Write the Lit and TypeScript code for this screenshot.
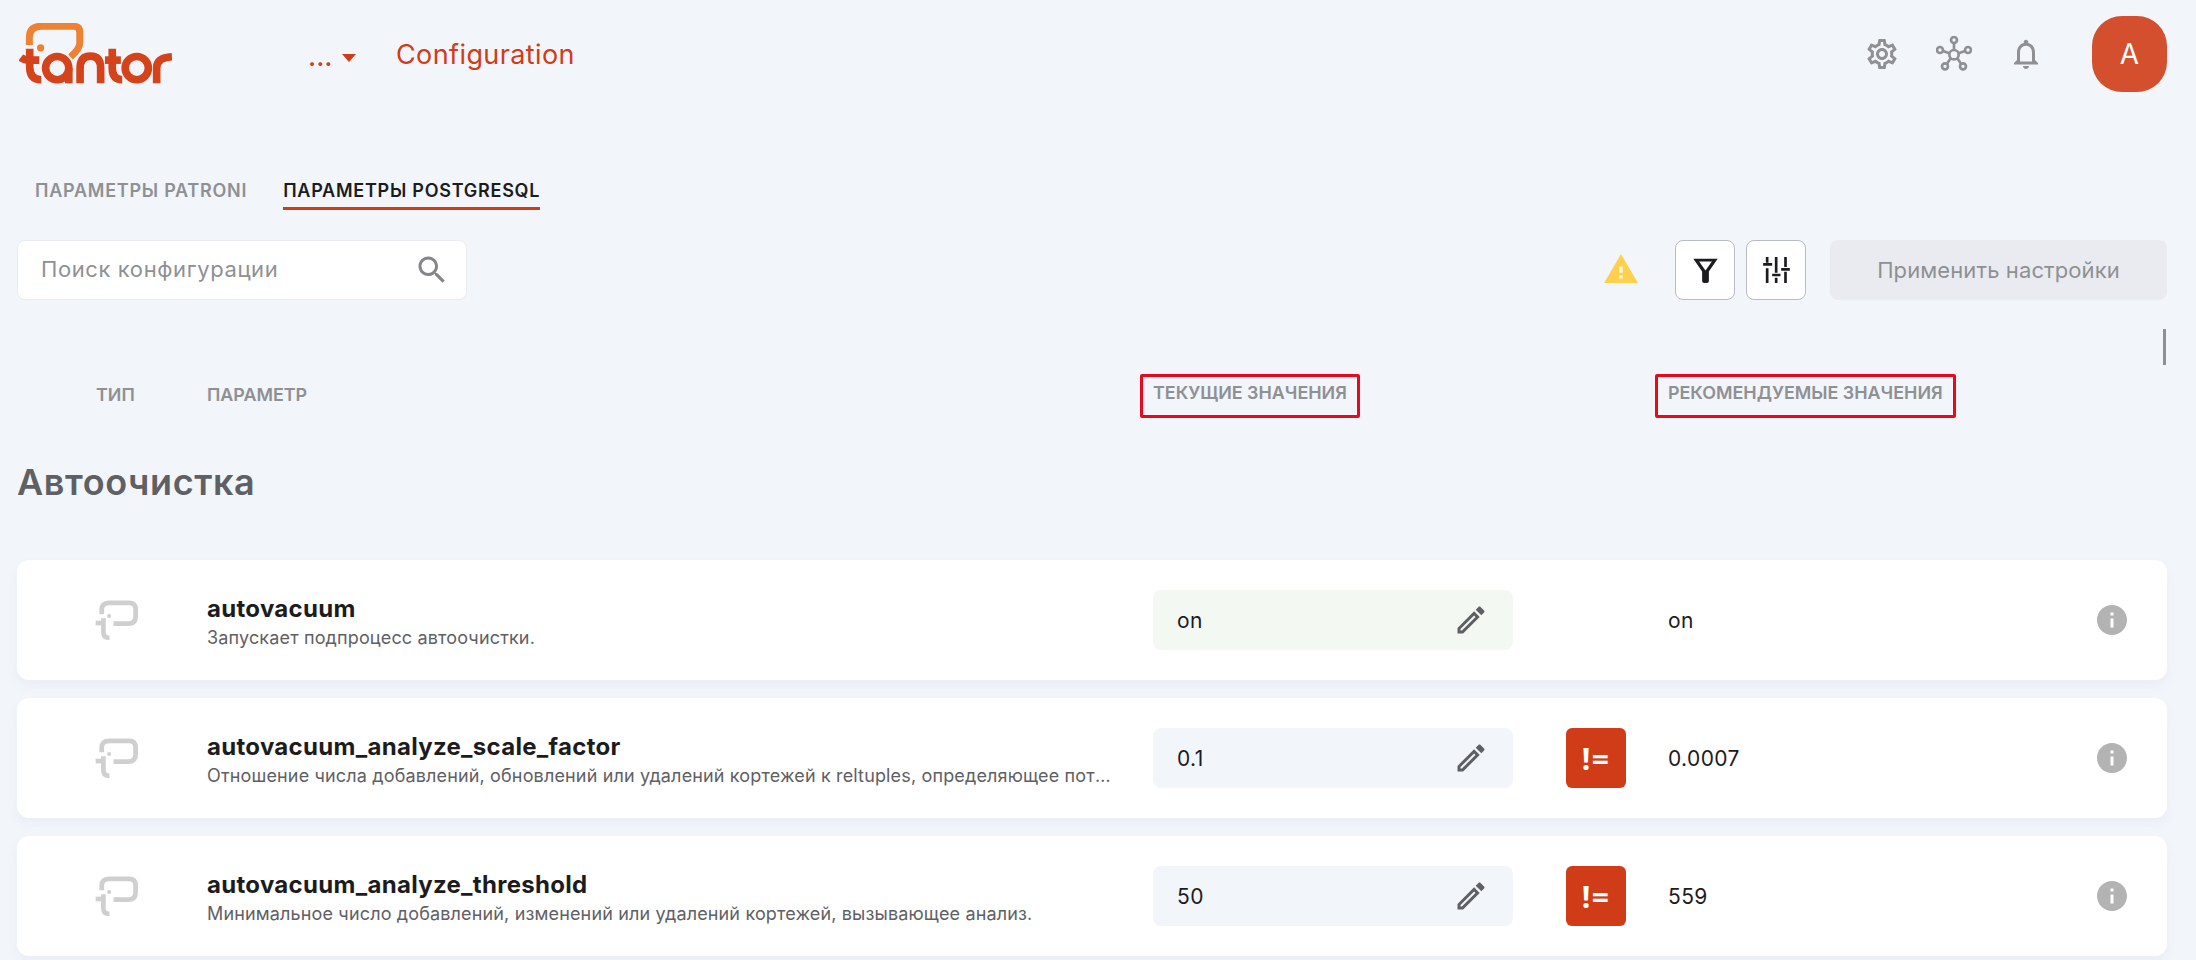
import { LitElement, html, css } from "lit";
import { customElement } from "lit/decorators.js";

const ROWS = [
  { name: "autovacuum", desc: "Запускает подпроцесс автоочистки.", cur: "on", rec: "on", match: true },
  { name: "autovacuum_analyze_scale_factor", desc: "Отношение числа добавлений, обновлений или удалений кортежей к reltuples, определяющее потребность в анализе таблицы.", cur: "0.1", rec: "0.0007", match: false },
  { name: "autovacuum_analyze_threshold", desc: "Минимальное число добавлений, изменений или удалений кортежей, вызывающее анализ.", cur: "50", rec: "559", match: false },
];

const mat = (d: string, size = 36) => html`<svg width=${size} height=${size} viewBox="0 0 24 24" fill="currentColor"><path d=${d}></path></svg>`;
const GEAR = "M19.43 12.98c.04-.32.07-.64.07-.98 0-.34-.03-.66-.07-.98l2.11-1.65c.19-.15.24-.42.12-.64l-2-3.46c-.09-.16-.26-.25-.44-.25-.06 0-.12.01-.17.03l-2.49 1c-.52-.4-1.08-.73-1.69-.98l-.38-2.65C14.46 2.18 14.25 2 14 2h-4c-.25 0-.46.18-.49.42l-.38 2.65c-.61.25-1.17.59-1.69.98l-2.49-1c-.06-.02-.12-.03-.18-.03-.17 0-.34.09-.43.25l-2 3.46c-.13.22-.07.49.12.64l2.11 1.65c-.04.32-.07.65-.07.98 0 .33.03.66.07.98l-2.11 1.65c-.19.15-.24.42-.12.64l2 3.46c.09.16.26.25.44.25.06 0 .12-.01.17-.03l2.49-1c.52.4 1.08.73 1.69.98l.38 2.65c.03.24.24.42.49.42h4c.25 0 .46-.18.49-.42l.38-2.65c.61-.25 1.17-.59 1.69-.98l2.49 1c.06.02.12.03.18.03.17 0 .34-.09.43-.25l2-3.46c.12-.22.07-.49-.12-.64l-2.11-1.65zm-1.98-1.71c.04.31.05.52.05.73 0 .21-.02.43-.05.73l-.14 1.13.89.7 1.08.84-.7 1.21-1.27-.51-1.04-.42-.9.68c-.43.32-.84.56-1.25.73l-1.06.43-.16 1.13-.2 1.35h-1.4l-.19-1.35-.16-1.13-1.06-.43c-.43-.18-.83-.41-1.23-.71l-.91-.7-1.06.43-1.27.51-.7-1.21 1.08-.84.89-.7-.14-1.13c-.03-.31-.05-.54-.05-.74s.02-.43.05-.73l.14-1.13-.89-.7-1.08-.84.7-1.21 1.27.51 1.04.42.9-.68c.43-.32.84-.56 1.25-.73l1.06-.43.16-1.13.2-1.35h1.39l.19 1.35.16 1.13 1.06.43c.43.18.83.41 1.23.71l.91.7 1.06-.43 1.27-.51.7 1.21-1.07.85-.89.7.14 1.13zM12 8c-2.21 0-4 1.79-4 4s1.79 4 4 4 4-1.79 4-4-1.79-4-4-4zm0 6c-1.1 0-2-.9-2-2s.9-2 2-2 2 .9 2 2-.9 2-2 2z";
const BELL = "M12 22c1.1 0 2-.9 2-2h-4c0 1.1.89 2 2 2zm6-6v-5c0-3.07-1.64-5.64-4.5-6.32V4c0-.83-.67-1.5-1.5-1.5s-1.5.67-1.5 1.5v.68C7.63 5.36 6 7.92 6 11v5l-2 2v1h16v-1l-2-2zm-2 1H8v-6c0-2.48 1.51-4.5 4-4.5s4 2.02 4 4.5v6z";
const SEARCH = "M15.5 14h-.79l-.28-.27C15.41 12.59 16 11.11 16 9.5 16 5.91 13.09 3 9.5 3S3 5.91 3 9.5 5.91 16 9.5 16c1.61 0 3.09-.59 4.23-1.57l.27.28v.79l5 4.99L20.49 19l-4.99-5zm-6 0C7.01 14 5 11.99 5 9.5S7.01 5 9.5 5 14 7.01 14 9.5 11.99 14 9.5 14z";
const EDIT = "M3 17.25V21h3.75L17.81 9.94l-3.75-3.75L3 17.25zM5.92 19H5v-.92l9.06-9.06.92.92L5.92 19zM20.71 5.63l-2.34-2.34c-.2-.2-.45-.29-.71-.29s-.51.1-.7.29l-1.83 1.83 3.75 3.75 1.83-1.83c.39-.39.39-1.02 0-1.41z";
const INFO = "M12 2C6.48 2 2 6.48 2 12s4.48 10 10 10 10-4.48 10-10S17.52 2 12 2zm1 15h-2v-6h2v6zm0-8h-2V7h2v2z";

const logo = html`<svg class="logo" width="154" height="61" viewBox="58 68 462 184" fill="none">
  <path stroke="#ee8132" stroke-width="21" d="M88 134 V112 Q88 78 124 78 H222 Q240 78 240 96 V128 Q240 146 212 170"></path>
  <circle cx="122" cy="143" r="11" fill="#ee8132"></circle>
  <g stroke="#d5431a" stroke-width="23">
    <path d="M89 146 V200 Q89 239 124 239"></path>
    <path d="M62 172 Q72 180 88 180 H118"></path>
    <circle cx="172" cy="204" r="35"></circle>
    <path d="M207 204 V250"></path>
    <path d="M241 250 V204 Q241 168 272 168 Q303 168 303 204 V250"></path>
    <path d="M338 146 V204 Q338 239 368 239"></path>
    <path d="M316 180 H364"></path>
    <circle cx="412" cy="204" r="35"></circle>
    <path d="M472 250 V204 Q472 172 518 170"></path>
  </g>
</svg>`;

const typeIcon = html`<svg width="43" height="40" viewBox="105 86 128 118" fill="none" stroke="#cfcfcf" stroke-width="14">
  <path d="M125 128 V114 Q125 94 149 94 H206 Q226 94 226 114 V134 Q226 156 204 156 H160"></path>
  <circle cx="147" cy="133" r="6" fill="#cfcfcf" stroke="none"></circle>
  <path d="M130 140 V182 Q130 198 148 198"></path>
  <path d="M107 154 H130"></path>
</svg>`;

const network = html`<svg width="36" height="36" viewBox="258 48 108 108" fill="none" stroke="currentColor" stroke-width="8">
  <circle cx="312" cy="104" r="14"></circle>
  <circle cx="312" cy="60" r="9"></circle>
  <circle cx="270" cy="90" r="9"></circle>
  <circle cx="354" cy="90" r="9"></circle>
  <circle cx="285" cy="139" r="9"></circle>
  <circle cx="339" cy="139" r="9"></circle>
  <path d="M312 69 V90 M279 93 L298 100 M345 93 L326 100 M291 131 L302 115 M333 131 L322 115"></path>
</svg>`;

const warn = html`<svg width="34" height="29" viewBox="44 76 98 84">
  <path d="M93 76 L142 160 H44 Z" fill="#ffd04d"></path>
  <path d="M88 112 H98 V130 H88 Z M88 138 H98 V147 H88 Z" fill="#fbf6e6"></path>
</svg>`;

const funnel = html`<svg width="25" height="25" viewBox="308 82 74 74">
  <path d="M309 84 H381 L355 122 V150 Q355 156 349 156 H341 Q335 156 335 150 V122 Z M326 92 L345 119 L364 92 Z" fill="#1c1c1e" fill-rule="evenodd"></path>
</svg>`;

const sliders = html`<svg width="27" height="26" viewBox="518 78 80 78" fill="none" stroke="#1c1c1e" stroke-width="8">
  <path d="M530 78 V95 M518 100 H545 M530 112 V156 M557 78 V125 M545 132 H570 M557 140 V156 M585 78 V108 M572 115 H598 M585 122 V156"></path>
</svg>`;

@customElement("app-root")
export class AppRoot extends LitElement {
  static styles = css`
    :host {
      display: block;
      position: relative;
      min-height: 100vh;
      background: #f2f5fa;
      font-family: Inter, "Liberation Sans", sans-serif;
      color: #1c1c1e;
      overflow: hidden;
    }
    .top {
      display: flex;
      align-items: center;
      height: 108px;
      padding: 0 29px 0 19px;
    }
    .logo { display: block; margin-top: -2px; }
    .crumb {
      display: flex;
      align-items: center;
      margin-left: 135px;
      color: #d03c17;
      font-size: 27px;
    }
    .dots { font-weight: 500; width: 34px; line-height: 1; padding-top: 5px; }
    .caret { width: 0; height: 0; border: 7.5px solid transparent; border-top: 8px solid #d03c17; border-bottom: 0; margin-top: 7px; }
    .page { margin-left: 40px; letter-spacing: 0.4px; padding-top: 1px; }
    .spacer { flex: 1; }
    .actions { display: flex; align-items: center; gap: 36px; color: #8f9094; }
    .actions svg { display: block; }
    .avatar {
      width: 75px;
      height: 76px;
      margin-left: 48px;
      border-radius: 30px;
      background: #d44f2d;
      color: #fff;
      display: flex;
      align-items: center;
      justify-content: center;
      font-size: 28px;
    }
    .tabs {
      display: flex;
      gap: 36px;
      margin-top: 60px;
      padding-left: 35px;
      font-size: 18px;
      font-weight: 600;
      color: #8f9094;
      letter-spacing: 0.75px;
    }
    .tab { height: 42px; line-height: 46px; box-sizing: border-box; }
    .tab.on { color: #1c1c1e; border-bottom: 3px solid #d03c17; }
    .toolbar {
      display: flex;
      align-items: center;
      margin-top: 30px;
      padding: 0 29px 0 17px;
    }
    .search {
      width: 450px;
      height: 60px;
      box-sizing: border-box;
      background: #fff;
      border: 1.5px solid #e9ebf0;
      border-radius: 8px;
      display: flex;
      align-items: center;
      justify-content: space-between;
      padding: 0 16px 0 23px;
      color: #8f9094;
      font-size: 22px;
      letter-spacing: 0.6px;
    }
    .search span { padding-bottom: 2px; }
    .search svg { display: block; color: #85868a; }
    .warn { display: block; margin-right: 37px; }
    .square {
      width: 60px;
      height: 60px;
      box-sizing: border-box;
      background: #fff;
      border: 1.5px solid #b9bbc6;
      border-radius: 8px;
      display: flex;
      align-items: center;
      justify-content: center;
      margin-right: 11px;
    }
    .apply {
      margin-left: 13px;
      width: 337px;
      height: 60px;
      border-radius: 8px;
      background: #e9ebf0;
      color: #8f9094;
      display: flex;
      align-items: center;
      justify-content: center;
      font-size: 22px;
      letter-spacing: 0.1px;
      padding-bottom: 1px;
      box-sizing: border-box;
    }
    .grid {
      display: grid;
      grid-template-columns: 190px 946px 360px 155px 1fr auto;
      align-items: center;
    }
    .heads {
      margin-top: 74px;
      padding: 0 29px 0 17px;
      height: 44px;
      font-size: 17.9px;
      font-weight: 600;
      color: #8f9094;
    }
    .heads .type { padding-left: 79px; }
    .plain { padding-bottom: 4px; }
    .mark {
      justify-self: start;
      margin-left: -13px;
      padding: 0 10px;
      height: 44px;
      line-height: 32px;
      box-sizing: border-box;
      border: 3px solid #e8091f;
      border-radius: 2px;
    }
    .section {
      margin: 40px 0 54px 17px;
      height: 48px;
      line-height: 48px;
      font-size: 36px;
      font-weight: 600;
      letter-spacing: 0.6px;
      color: #5f6064;
    }
    .rows { display: flex; flex-direction: column; gap: 18px; padding: 0 29px 0 17px; }
    .card {
      height: 120px;
      background: #fff;
      border-radius: 12px;
      box-shadow: 0 6px 12px rgba(90, 100, 130, 0.05);
    }
    .ti { padding-left: 78px; }
    .ti svg { display: block; }
    .param { padding: 4px 38px 0 0; min-width: 0; }
    .name { font-size: 24px; font-weight: 700; line-height: 32px; letter-spacing: 0.3px; }
    .desc {
      font-size: 18px;
      line-height: 26px;
      letter-spacing: 0.15px;
      color: #5f6064;
      white-space: nowrap;
      overflow: hidden;
      text-overflow: ellipsis;
    }
    .val {
      height: 60px;
      border-radius: 8px;
      background: #f2f5fa;
      display: flex;
      align-items: center;
      justify-content: space-between;
      padding: 0 24px;
      font-size: 21px;
      letter-spacing: 0.4px;
    }
    .val.ok { background: #f4f8f3; }
    .val svg { display: block; color: #5f6064; }
    .ne {
      width: 60px;
      height: 60px;
      margin-left: 53px;
      border-radius: 6px;
      background: #d03c17;
      color: #fff;
      display: flex;
      align-items: center;
      justify-content: center;
      font: 700 30px "Open Sans", sans-serif;
      letter-spacing: 1.5px;
    }
    .rec { font-size: 21px; letter-spacing: 0.4px; }
    .info { padding-right: 37px; color: #b3b3b3; }
    .info svg { display: block; }
    .tick {
      position: absolute;
      left: 2163px;
      top: 329px;
      width: 3px;
      height: 36px;
      background: #8f9094;
    }
  `;

  render() {
    return html`
      <div class="top">
        ${logo}
        <div class="crumb">
          <span class="dots">...</span><span class="caret"></span>
          <span class="page">Configuration</span>
        </div>
        <div class="spacer"></div>
        <div class="actions">${mat(GEAR)}${network}${mat(BELL)}</div>
        <div class="avatar">A</div>
      </div>
      <div class="tabs">
        <div class="tab">ПАРАМЕТРЫ PATRONI</div>
        <div class="tab on">ПАРАМЕТРЫ POSTGRESQL</div>
      </div>
      <div class="toolbar">
        <div class="search"><span>Поиск конфигурации</span>${mat(SEARCH)}</div>
        <div class="spacer"></div>
        <div class="warn">${warn}</div>
        <div class="square">${funnel}</div>
        <div class="square">${sliders}</div>
        <div class="apply">Применить настройки</div>
      </div>
      <div class="grid heads">
        <div class="plain type">ТИП</div>
        <div class="plain">ПАРАМЕТР</div>
        <div class="mark">ТЕКУЩИЕ ЗНАЧЕНИЯ</div>
        <div></div>
        <div class="mark">РЕКОМЕНДУЕМЫЕ ЗНАЧЕНИЯ</div>
      </div>
      <div class="section">Автоочистка</div>
      <div class="rows">
        ${ROWS.map(
          (r) => html`
            <div class="grid card">
              <div class="ti">${typeIcon}</div>
              <div class="param">
                <div class="name">${r.name}</div>
                <div class="desc">${r.desc}</div>
              </div>
              <div class="val ${r.match ? "ok" : ""}"><span>${r.cur}</span>${mat(EDIT)}</div>
              <div>${r.match ? "" : html`<div class="ne">!=</div>`}</div>
              <div class="rec">${r.rec}</div>
              <div class="info">${mat(INFO, 36)}</div>
            </div>
          `,
        )}
      </div>
      <div class="tick"></div>
    `;
  }
}
